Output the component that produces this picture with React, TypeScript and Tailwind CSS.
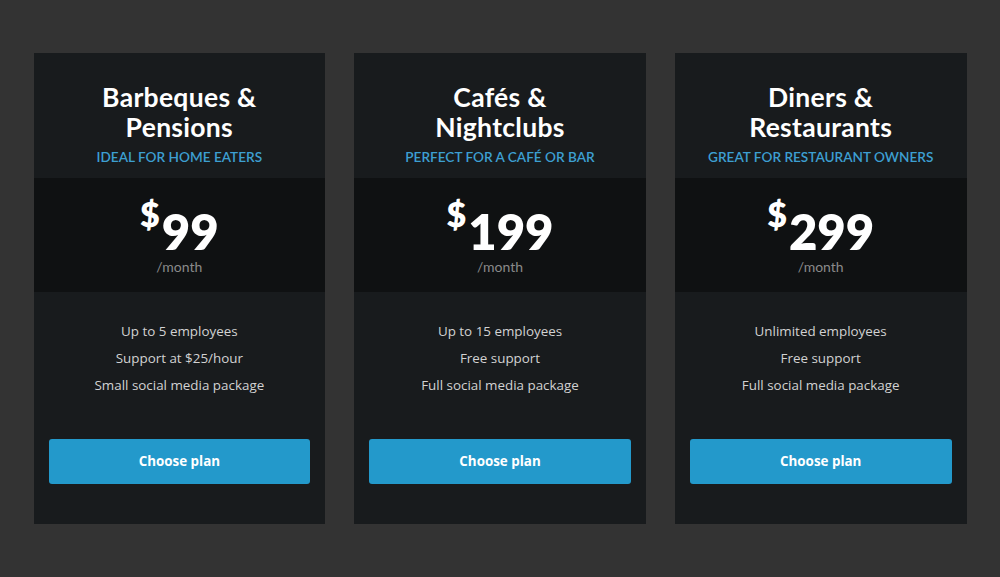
const plans = [
  {
    title: ['Barbeques &', 'Pensions'],
    tagline: 'Ideal for home eaters',
    price: '99',
    features: ['Up to 5 employees', 'Support at $25/hour', 'Small social media package'],
  },
  {
    title: ['Cafés &', 'Nightclubs'],
    tagline: 'Perfect for a café or bar',
    price: '199',
    features: ['Up to 15 employees', 'Free support', 'Full social media package'],
  },
  {
    title: ['Diners &', 'Restaurants'],
    tagline: 'Great for restaurant owners',
    price: '299',
    features: ['Unlimited employees', 'Free support', 'Full social media package'],
  },
]

const heading = "font-['Lato','Noto_Sans',sans-serif]"
const body = "font-['Open_Sans','Noto_Sans',sans-serif]"

export default function App() {
  return (
    <div className="min-h-[577px] w-full bg-[#333333] pt-[53px]">
      <div className="mx-auto flex w-[933px] gap-[29px]">
        {plans.map(p => (
          <div key={p.price} className="flex w-[292px] flex-col bg-[#181b1d]">
            {/* Header */}
            <div className="pt-[29px] pb-[11px] text-center">
              <h3 className={`${heading} text-[26.5px] font-bold leading-[30px] tracking-[0.3px] text-white`}>
                {p.title[0]}
                <br />
                {p.title[1]}
              </h3>
              <p className={`${heading} mt-[5px] text-[13.6px] font-semibold uppercase leading-[20px] text-[#3d9fd1]`}>
                {p.tagline}
              </p>
            </div>

            {/* Price */}
            <div className="h-[114px] bg-[#0f1112] pt-[17px] text-center">
              <div className={`${heading} flex items-start justify-center font-extrabold text-white`}>
                <span className="mt-[2px] text-[34px] leading-[34px]">$</span>
                <span className="mt-[12px] ml-[2px] text-[49px] leading-[48px]">{p.price}</span>
              </div>
              <p className={`${heading} mt-[2px] text-[14px] leading-[20px] text-[#8a8a8a]`}>/month</p>
            </div>

            {/* Features */}
            <div className="flex flex-1 flex-col px-[15px] pt-[26px] pb-[40px]">
              <ul className={`${body} text-center text-[13.4px] leading-[27px] text-[#d2d2d2]`}>
                {p.features.map(f => (
                  <li key={f}>{f}</li>
                ))}
              </ul>
              <button
                className={`${body} mt-[40px] h-[45px] w-full rounded-[3px] bg-[#2399cb] text-[13.4px] font-bold text-white`}
              >
                Choose plan
              </button>
            </div>
          </div>
        ))}
      </div>
    </div>
  )
}
